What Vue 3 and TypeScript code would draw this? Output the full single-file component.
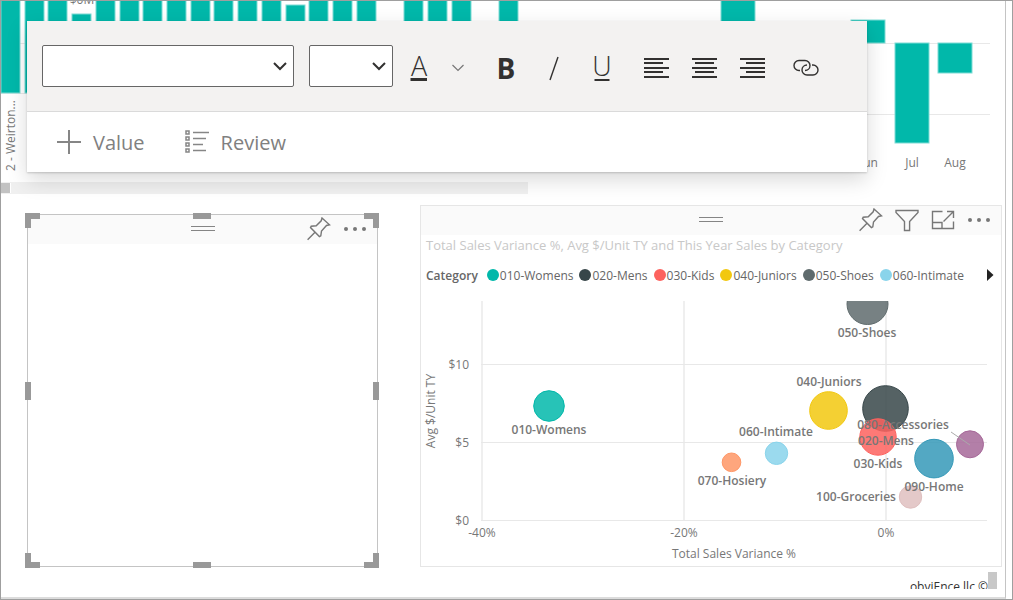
<script setup lang="ts">
import { ref } from 'vue'

interface Bar { x: number; y: number; w: number; h: number }
interface Bubble {
  name: string
  x: number
  y: number
  r: number
  color: string
  lx: number
  ly: number
}

const fontFamily = ref('')
const fontSize = ref('')

const storeBars: Bar[] = [
  { x: 0, y: -2, w: 19, h: 94 },
  { x: 24, y: -2, w: 19, h: 94 },
  ...[2, 3, 4, 5, 6, 7, 8, 9, 10, 11, 12, 13, 14, 15, 17, 18, 19, 21].map((i) => {
    const top = i === 3 ? 13 : i === 12 ? 4 : -2
    return { x: Math.round(i * 23.72), y: top, w: 19, h: 92 - top }
  }),
]

const monthBars: Bar[] = [
  { x: 193, y: -2, w: 34, h: 44 },
  { x: 323, y: 19, w: 34, h: 23 },
  { x: 367, y: 42, w: 34, h: 100 },
  { x: 410, y: 42, w: 34, h: 30 },
]

const months = [
  { label: 'Jun', x: 341 },
  { label: 'Jul', x: 384 },
  { label: 'Aug', x: 427 },
]

const legend = [
  { name: '010-Womens', color: '#01b8aa' },
  { name: '020-Mens', color: '#374649' },
  { name: '030-Kids', color: '#fd625e' },
  { name: '040-Juniors', color: '#f2c80f' },
  { name: '050-Shoes', color: '#5f6b6d' },
  { name: '060-Intimate', color: '#8ad4eb' },
]

const bubbles: Bubble[] = [
  { name: '050-Shoes', x: 446.5, y: 3, r: 20.5, color: '#5f6b6d', lx: 446, ly: 36 },
  { name: '020-Mens', x: 464.5, y: 107.5, r: 22.8, color: '#374649', lx: 465, ly: 144 },
  { name: '010-Womens', x: 128, y: 105, r: 15.3, color: '#01b8aa', lx: 128, ly: 133 },
  { name: '040-Juniors', x: 407.5, y: 109.5, r: 18.8, color: '#f2c80f', lx: 408, ly: 85 },
  { name: '030-Kids', x: 457, y: 136, r: 18.2, color: '#fd625e', lx: 457, ly: 167 },
  { name: '060-Intimate', x: 355.5, y: 152.3, r: 11.2, color: '#8ad4eb', lx: 355, ly: 135 },
  { name: '070-Hosiery', x: 310.5, y: 161.3, r: 9.3, color: '#fe9666', lx: 311, ly: 184 },
  { name: '080-Accessories', x: 549, y: 143.3, r: 13.5, color: '#a66999', lx: 482, ly: 128 },
  { name: '090-Home', x: 513, y: 157.6, r: 19.3, color: '#3599b8', lx: 513, ly: 190 },
  { name: '100-Groceries', x: 489.5, y: 196, r: 11.2, color: '#dfbfbf', lx: 435, ly: 200 },
]

const xTicks = [
  { label: '-40%', x: 61 },
  { label: '-20%', x: 263 },
  { label: '0%', x: 465 },
]
const yTicks = [
  { label: '$10', y: 63 },
  { label: '$5', y: 141 },
  { label: '$0', y: 219 },
]

const alignments = [
  { label: 'Align left', d: 'M0 1h25M0 5h19M0 10h25M0 14h19M0 19h25' },
  { label: 'Align center', d: 'M0 1h25M3 5h19M0 10h25M3 14h19M0 19h25' },
  { label: 'Align right', d: 'M0 1h25M6 5h19M0 10h25M6 14h19M0 19h25' },
]
const handles = ['nw', 'n', 'ne', 'w', 'e', 'sw', 's', 'se']
const pinPath =
  'M15 1 22.5 7.8 19.5 8.5 14.5 14 13.8 18.8 12.4 19.6 3.5 10.6 4.2 9.2 9.2 8.8 14.2 3.8ZM8.5 14.8.6 22.8'
</script>

<template>
  <div class="window">
    <main class="canvas">
      <section class="top-row">
        <div class="store-chart">
          <svg class="chart" viewBox="0 0 527 181" role="img" aria-label="Sales by store">
            <path class="grid" d="M0 42.5H527M0 92.5H527" />
            <rect v-for="b in storeBars" :key="b.x" class="bar" :x="b.x" :y="b.y" :width="b.w" :height="b.h" />
            <text class="axis" x="81" y="3" text-anchor="middle">$0M</text>
            <text class="axis" transform="translate(14 170) rotate(-90)">2 - Weirton...</text>
          </svg>
          <div class="scrollbar"><span class="thumb"></span></div>
        </div>
        <svg class="chart" viewBox="0 0 477 193" role="img" aria-label="Variance by month">
          <path class="grid" d="M20 42.5H462M20 113.5H462" />
          <rect v-for="b in monthBars" :key="b.x" class="bar" :x="b.x" :y="b.y" :width="b.w" :height="b.h" />
          <text v-for="m in months" :key="m.label" class="axis" :x="m.x" y="166" text-anchor="middle">{{ m.label }}</text>
        </svg>
      </section>

      <section class="bottom-row">
        <article class="panel text-panel">
          <header class="panel-head">
            <span class="grip"></span>
            <div class="actions">
              <button type="button" aria-label="Pin visual">
                <svg width="24" height="24" viewBox="0 0 24 24"><path :d="pinPath" /></svg>
              </button>
              <button type="button" aria-label="More options">
                <svg class="dots" width="24" height="24" viewBox="0 0 24 24"><circle cx="3" cy="12" r="2" /><circle cx="12" cy="12" r="2" /><circle cx="21" cy="12" r="2" /></svg>
              </button>
            </div>
          </header>
          <div class="frame">
            <span v-for="h in handles" :key="h" class="handle" :class="h"></span>
          </div>
        </article>

        <article class="panel scatter-panel">
          <header class="panel-head">
            <span class="grip"></span>
            <div class="actions">
              <button type="button" aria-label="Pin visual">
                <svg width="24" height="24" viewBox="0 0 24 24"><path :d="pinPath" /></svg>
              </button>
              <button type="button" aria-label="Filters">
                <svg width="24" height="24" viewBox="0 0 24 24"><path d="M1 2.5H23V4.5L14.6 13.5V22.5H9.5V13.5L1 4.5Z" /></svg>
              </button>
              <button type="button" aria-label="Focus mode">
                <svg width="24" height="24" viewBox="0 0 24 24"><path d="M11.5 3.5H1.5V20.5H22.5V13.5M1.5 14.5H11V20.5M12.5 13.5 22 4M16 3.5H22.5V10" /></svg>
              </button>
              <button type="button" aria-label="More options">
                <svg class="dots" width="24" height="24" viewBox="0 0 24 24"><circle cx="3" cy="12" r="2" /><circle cx="12" cy="12" r="2" /><circle cx="21" cy="12" r="2" /></svg>
              </button>
            </div>
          </header>
          <h2 class="title">Total Sales Variance %, Avg $/Unit TY and This Year Sales by Category</h2>
          <div class="legend">
            <strong>Category</strong>
            <ul>
              <li v-for="l in legend" :key="l.name">
                <svg width="12" height="12" viewBox="0 0 12 12"><circle cx="6" cy="6" r="6" :fill="l.color" /></svg>{{ l.name }}
              </li>
            </ul>
            <button type="button" class="next" aria-label="Next legend items">
              <svg width="7" height="12" viewBox="0 0 7 12"><path d="M0 0 6.5 6 0 12Z" /></svg>
            </button>
          </div>
          <svg class="scatter" viewBox="0 0 580 265" role="img" aria-label="Scatter chart by category">
            <path v-for="t in xTicks" :key="t.label" class="grid-v" :d="`M${t.x} 0V219`" />
            <path v-for="t in yTicks" :key="t.label" class="grid" :d="`M60 ${t.y + 0.5}H566`" />
            <circle v-for="b in bubbles" :key="b.name" class="bubble" :cx="b.x" :cy="b.y" :r="b.r" :fill="b.color" :stroke="b.color" />
            <path class="leader" d="M530 131 549 144" />
            <text v-for="b in bubbles" :key="b.name" class="label" :x="b.lx" :y="b.ly" text-anchor="middle">{{ b.name }}</text>
            <text v-for="t in xTicks" :key="t.label" class="axis" :x="t.x" y="236" text-anchor="middle">{{ t.label }}</text>
            <text v-for="t in yTicks" :key="t.label" class="axis" x="48" :y="t.y + 5" text-anchor="end">{{ t.label }}</text>
            <text class="axis" x="313" y="257" text-anchor="middle">Total Sales Variance %</text>
            <text class="axis" transform="translate(14 110) rotate(-90)" text-anchor="middle">Avg $/Unit TY</text>
          </svg>
        </article>
      </section>

      <footer class="credit">
        <span class="credit-text">obviEnce llc ©</span>
        <span class="credit-thumb"></span>
      </footer>

      <div class="toolbar" role="toolbar" aria-label="Text formatting">
        <div class="format-row">
          <label class="picker family">
            <select v-model="fontFamily" aria-label="Font family"><option value=""></option></select>
            <svg width="14" height="9" viewBox="0 0 14 9"><path d="M1 1 7 7 13 1" /></svg>
          </label>
          <label class="picker size">
            <select v-model="fontSize" aria-label="Font size"><option value=""></option></select>
            <svg width="14" height="9" viewBox="0 0 14 9"><path d="M1 1 7 7 13 1" /></svg>
          </label>
          <div class="group color-group">
            <button type="button" aria-label="Font color">
              <svg width="20" height="26" viewBox="0 0 20 26"><text class="thin" x="10" y="21" text-anchor="middle">A</text><path class="thick" d="M1.5 24.5H18" /></svg>
            </button>
            <button type="button" aria-label="Font color options">
              <svg width="12" height="8" viewBox="0 0 12 8"><path class="faint" d="M.5 1 6 6.5 11.5 1" /></svg>
            </button>
          </div>
          <div class="group">
            <button type="button" class="bold" aria-label="Bold">B</button>
            <button type="button" aria-label="Italic">
              <svg width="10" height="26" viewBox="0 0 10 26"><path class="slash" d="M9 2 1 25" /></svg>
            </button>
            <button type="button" aria-label="Underline">
              <svg width="20" height="26" viewBox="0 0 20 26"><text class="thin" x="10" y="21" text-anchor="middle">U</text><path class="line" d="M2.5 25H17.5" /></svg>
            </button>
          </div>
          <div class="group">
            <button v-for="a in alignments" :key="a.label" type="button" :aria-label="a.label">
              <svg width="25" height="20" viewBox="0 0 25 20"><path class="line" :d="a.d" /></svg>
            </button>
          </div>
          <div class="group">
            <button type="button" aria-label="Insert link">
              <svg width="26" height="18" viewBox="0 0 26 18"><path class="link" d="M7 11.5H6a5 5 0 0 1 0-10h6a5 5 0 0 1 5 5c0 2.8-2.2 5-5 5M19 6h1a5 5 0 0 1 0 10h-6a5 5 0 0 1-5-5c0-2.8 2.2-5 5-5" /></svg>
            </button>
          </div>
        </div>
        <div class="value-row">
          <button type="button">
            <svg width="24" height="24" viewBox="0 0 24 24"><path d="M12 0V24M0 12H24" /></svg>Value
          </button>
          <button type="button">
            <svg class="list" width="24" height="24" viewBox="0 0 24 24"><path d="M1 1h3v3h-3ZM1 7h3v3h-3ZM1 13h3v3h-3ZM1 19h3v3h-3ZM8 2.5H24M8 8.5H21M8 14.5H18M8 20.5H21" /></svg>Review
          </button>
        </div>
      </div>
    </main>
  </div>
</template>

<style>
body {
  margin: 0;
  background: #fff;
}
</style>

<style scoped>
.window {
  box-sizing: border-box;
  min-height: 100vh;
  display: flex;
  border: 1px solid #9f9f9f;
  padding-right: 6px;
  font-family: "Open Sans", "Noto Sans", sans-serif;
  font-size: 12px;
  color: #666;
}
.canvas {
  position: relative;
  flex: 1;
  border-right: 1px solid #c4c4c4;
  border-bottom: 2px solid #dcdcdc;
}
button {
  display: flex;
  align-items: center;
  justify-content: center;
  padding: 0;
  border: 0;
  background: none;
  color: inherit;
  font-family: inherit;
  cursor: pointer;
}
.top-row {
  display: grid;
  grid-template-columns: 527fr 477fr;
}
.chart,
.scatter {
  display: block;
  width: 100%;
}
.grid,
.grid-v {
  stroke: #e8e8e8;
  stroke-width: 1;
}
.grid-v {
  stroke: #efefef;
  stroke-width: 2;
}
.bar {
  fill: #01b8aa;
  stroke: #7fdcd5;
  stroke-width: 1;
}
.axis {
  fill: #777;
  font-size: 12px;
}
.scrollbar {
  display: flex;
  align-items: center;
  height: 12px;
  background: #f0f0f0;
}
.thumb {
  width: 9px;
  height: 10px;
  border-right: 1px solid #fff;
  background: #c2c2c2;
}
.bottom-row {
  display: grid;
  grid-template-columns: 351fr 582fr;
  gap: 42px;
  padding: 11px 3px 0 26px;
}
.panel {
  position: relative;
  box-sizing: border-box;
  min-width: 0;
  border: 1px solid #e6e6e6;
}
.text-panel {
  margin-top: 9px;
  border-color: #c4c4c4;
}
.panel-head {
  display: grid;
  grid-template-columns: 1fr auto 1fr;
  height: 27px;
  padding-bottom: 2px;
  background: #fafafa;
}
.grip {
  grid-column: 2;
  align-self: center;
  width: 24px;
  height: 3px;
  border: solid #858585;
  border-width: 1px 0;
}
.actions {
  display: flex;
  justify-content: flex-end;
  align-items: center;
  gap: 12px;
  padding-right: 10px;
}
.actions path {
  fill: none;
  stroke: #777;
  stroke-width: 1.4;
}
.dots {
  fill: #777;
}
.frame {
  position: absolute;
  inset: -2px -2px -2px -3px;
  pointer-events: none;
}
.handle {
  position: absolute;
  box-sizing: border-box;
  width: 15px;
  height: 15px;
  border: 0 solid #999;
}
.nw { top: 0; left: 0; border-width: 6px 0 0 6px; }
.ne { top: 0; right: 0; border-width: 6px 6px 0 0; }
.sw { bottom: 0; left: 0; border-width: 0 0 6px 6px; }
.se { bottom: 0; right: 0; border-width: 0 6px 6px 0; }
.n,
.s {
  left: calc(50% - 9px);
  width: 18px;
  height: 6px;
  background: #999;
}
.n { top: 0; }
.s { bottom: 0; }
.w,
.e {
  top: calc(50% - 9px);
  width: 6px;
  height: 18px;
  background: #999;
}
.w { left: 0; }
.e { right: 0; }
.title {
  margin: 0;
  padding-left: 5px;
  font-size: 13px;
  font-weight: 500;
  line-height: 20px;
  color: #c8c8c8;
  white-space: nowrap;
}
.legend {
  display: flex;
  align-items: center;
  height: 40px;
  margin-bottom: 6px;
  padding: 0 7px 0 5px;
  white-space: nowrap;
}
.legend strong {
  font-weight: 600;
}
.legend ul {
  display: flex;
  flex: 1;
  gap: 6px;
  margin: 0;
  padding: 0 0 0 9px;
  list-style: none;
}
.legend li {
  display: flex;
  align-items: center;
  gap: 1px;
}
.next {
  fill: #222;
}
.bubble {
  fill-opacity: 0.85;
  stroke-width: 1;
}
.leader {
  stroke: #aaa;
}
.label {
  fill: #777;
  font-size: 12px;
  font-weight: 600;
}
.credit {
  display: flex;
  justify-content: flex-end;
  align-items: flex-end;
  height: 17px;
  padding: 5px 8px 0 0;
}
.credit-text {
  height: 9px;
  overflow: hidden;
  line-height: 14px;
  color: #333;
}
.credit-thumb {
  width: 9px;
  height: 17px;
  background: #c8c8c8;
}
.toolbar {
  position: absolute;
  top: 20px;
  left: 26px;
  background: #fff;
  box-shadow: 0 1px 2px rgba(0, 0, 0, 0.18), 0 8px 20px rgba(0, 0, 0, 0.15);
}
.format-row {
  display: flex;
  align-items: flex-start;
  gap: 6px;
  padding: 24px 37px 20px 15px;
  border-bottom: 1px solid #dadada;
  background: #f3f2f1;
  color: #323130;
}
.picker {
  display: grid;
  align-items: center;
  height: 42px;
}
.picker select,
.picker svg {
  grid-area: 1 / 1;
}
.picker select {
  width: 100%;
  height: 42px;
  border: 1px solid #666;
  border-radius: 2px;
  background: #fff;
  appearance: none;
}
.picker svg {
  justify-self: end;
  margin-right: 7px;
  pointer-events: none;
}
.picker path {
  fill: none;
  stroke: #323130;
  stroke-width: 2;
}
.family {
  width: 252px;
  margin-right: 9px;
}
.size {
  width: 84px;
}
.group {
  display: flex;
}
.group button {
  width: 48px;
  height: 46px;
}
.group svg {
  overflow: visible;
}
.color-group button {
  width: 40px;
}
.color-group button + button {
  width: 37px;
}
.group path {
  fill: none;
  stroke: #323130;
}
.group .thin {
  fill: #323130;
  font-size: 27px;
  font-weight: 300;
}
.group .thick {
  stroke-width: 3;
}
.group .line {
  stroke-width: 2;
}
.group .slash,
.group .link {
  stroke-width: 1.4;
}
.group .faint {
  stroke: #777;
  stroke-width: 1.2;
}
.group .bold {
  font-size: 28px;
  font-weight: 700;
}
.value-row {
  display: flex;
  gap: 40px;
  height: 60px;
  padding-left: 30px;
}
.value-row button {
  gap: 12px;
  font-size: 20px;
  color: #808080;
}
.value-row path {
  fill: none;
  stroke: #868686;
  stroke-width: 2;
}
.value-row .list path {
  stroke-width: 1.5;
}
</style>
